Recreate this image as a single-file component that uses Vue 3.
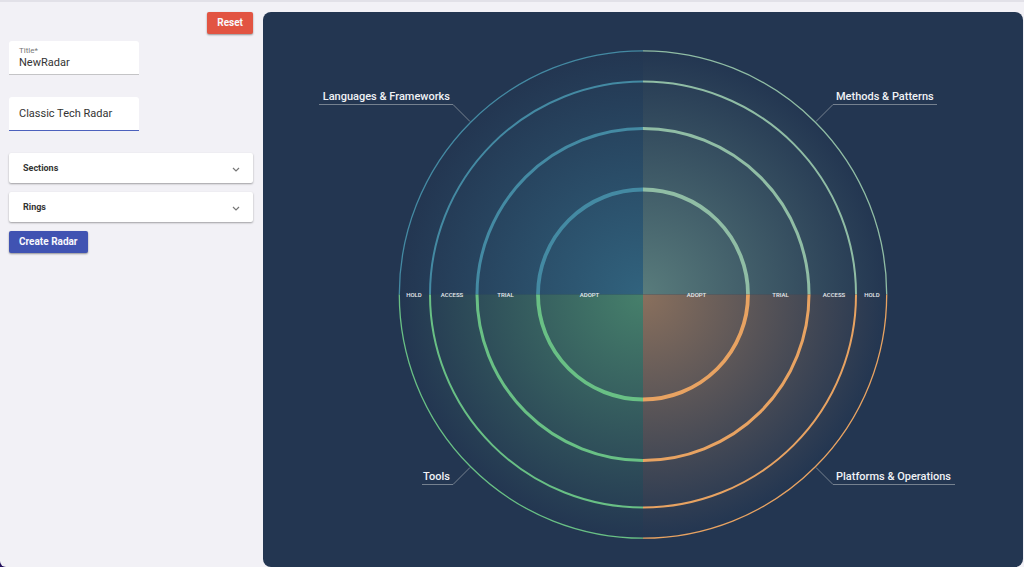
<script setup>
import { ref } from 'vue'

const title = ref('NewRadar')
const type = ref('Classic Tech Radar')
const panels = ['Sections', 'Rings']

const cx = 380
const cy = 282.5

const rings = [
  { name: 'ADOPT', r: 105, width: 3.8, label: 53.5 },
  { name: 'TRIAL', r: 166, width: 3, label: 137.5 },
  { name: 'ACCESS', r: 213, width: 2, label: 191 },
  { name: 'HOLD', r: 243.7, width: 1.3, label: 229 }
]

const outer = 244

const quadrants = [
  { id: 'languages', name: 'Languages & Frameworks', sx: -1, sy: -1, stroke: '#448aa3', fill: '#31637e', length: 131 },
  { id: 'methods', name: 'Methods & Patterns', sx: 1, sy: -1, stroke: '#90bda5', fill: '#597c7c', length: 101 },
  { id: 'tools', name: 'Tools', sx: -1, sy: 1, stroke: '#69c085', fill: '#46806b', length: 28 },
  { id: 'platforms', name: 'Platforms & Operations', sx: 1, sy: 1, stroke: '#e8a362', fill: '#8a705d', length: 119 }
]

const arc = (q, r) =>
  `M${cx + q.sx * r} ${cy}A${r} ${r} 0 0 ${q.sx * q.sy > 0 ? 1 : 0} ${cx} ${cy + q.sy * r}`
const wedge = (q) => `${arc(q, outer)}L${cx} ${cy}Z`
const lineY = (q) => (q.sy < 0 ? 92.5 : 472.5)
const leader = (q) =>
  `M${cx + q.sx * 173} ${cy + q.sy * 173}L${cx + q.sx * 190} ${lineY(q)}H${cx + q.sx * (193 + q.length)}`
</script>

<template>
  <div class="page">
    <aside class="sidebar">
      <div class="actions">
        <button type="button" class="btn danger">Reset</button>
      </div>
      <div class="field">
        <label for="title">Title*</label>
        <input id="title" v-model="title" type="text" required />
      </div>
      <div class="field active">
        <select id="type" v-model="type" aria-label="Radar type">
          <option>Classic Tech Radar</option>
        </select>
      </div>
      <div class="accordion">
        <button v-for="p in panels" :key="p" type="button" class="panel" aria-expanded="false">
          <span>{{ p }}</span>
          <svg class="chevron" viewBox="0 0 8 6" aria-hidden="true">
            <path d="M1 1L4 4L7 1" />
          </svg>
        </button>
      </div>
      <button type="button" class="btn primary">Create Radar</button>
    </aside>
    <main class="board">
      <svg class="radar" viewBox="0 0 760 555" role="img" aria-label="Tech radar">
        <defs>
          <radialGradient
            v-for="q in quadrants"
            :id="'fill-' + q.id"
            :key="q.id"
            gradientUnits="userSpaceOnUse"
            :cx="cx"
            :cy="cy"
            :r="outer"
          >
            <stop offset="0" :stop-color="q.fill" />
            <stop offset="1" :stop-color="q.fill" stop-opacity="0" />
          </radialGradient>
        </defs>
        <g v-for="q in quadrants" :key="q.id">
          <path :d="wedge(q)" :fill="`url(#fill-${q.id})`" />
          <path
            v-for="ring in rings"
            :key="ring.name"
            class="line"
            :d="arc(q, ring.r)"
            :stroke="q.stroke"
            :stroke-width="ring.width"
          />
          <path class="line leader" :d="leader(q)" />
          <text
            class="quadrant"
            :x="cx + q.sx * 193"
            :y="lineY(q) - 5"
            :text-anchor="q.sx < 0 ? 'end' : 'start'"
          >{{ q.name }}</text>
        </g>
        <g v-for="ring in rings" :key="ring.name" class="ring">
          <text :x="cx - ring.label" :y="cy + 2">{{ ring.name }}</text>
          <text :x="cx + ring.label" :y="cy + 2">{{ ring.name }}</text>
        </g>
      </svg>
    </main>
  </div>
</template>

<style>
body {
  margin: 0;
  background: #23105c;
}
</style>

<style scoped>
.page {
  box-sizing: border-box;
  display: flex;
  min-height: 100vh;
  padding: 10px 1px 0 9px;
  gap: 10px;
  border-top: 2px solid #e2e1e8;
  border-bottom-left-radius: 6px;
  background: #f2f1f6;
  color: #333;
  font-family: Roboto, "Liberation Sans", sans-serif;
}
.sidebar {
  display: flex;
  flex: 0 0 244px;
  flex-direction: column;
  align-items: flex-start;
}
.actions {
  display: flex;
  align-self: stretch;
  justify-content: flex-end;
  margin-bottom: 7px;
}
.btn {
  height: 22px;
  padding: 0 10px;
  border: 0;
  border-radius: 2px;
  color: #f8f8fc;
  font: 700 10px/22px Roboto, "Liberation Sans", sans-serif;
  box-shadow: 0 1px 2px rgba(0, 0, 0, 0.4);
}
.danger {
  background: #e25442;
}
.primary {
  background: #4053b2;
}
.field {
  box-sizing: border-box;
  display: flex;
  flex-direction: column;
  justify-content: center;
  width: 130px;
  height: 34px;
  margin-bottom: 22px;
  padding: 0 10px;
  border-bottom: 1px solid #c4c4c6;
  border-radius: 3px 3px 0 0;
  background: #fff;
}
.field.active {
  border-bottom-color: #4c61bd;
}
.field label {
  color: #777;
  font-size: 8px;
  line-height: 10px;
}
.field input,
.field select {
  width: 100%;
  margin: 0;
  padding: 0;
  border: 0;
  outline: 0;
  appearance: none;
  background: transparent;
  color: #333;
  font: 400 11px/14px Roboto, "Liberation Sans", sans-serif;
}
.accordion {
  display: flex;
  align-self: stretch;
  flex-direction: column;
  gap: 9px;
  margin-bottom: 9px;
}
.panel {
  display: flex;
  align-items: center;
  justify-content: space-between;
  height: 30px;
  padding: 0 13px 0 14px;
  border: 0;
  border-radius: 2px;
  background: #fff;
  color: #333;
  font: 700 9px/12px Roboto, "Liberation Sans", sans-serif;
  box-shadow: 0 1px 2px rgba(0, 0, 0, 0.35);
}
.chevron {
  width: 8px;
  height: 6px;
  margin-top: 3px;
  fill: none;
  stroke: #777;
  stroke-width: 1.2;
}
.board {
  display: flex;
  flex: 1;
  min-width: 0;
  border-radius: 8px;
  background: #233651;
}
.radar {
  display: block;
  width: 100%;
}
.line {
  fill: none;
}
.leader {
  stroke: #75818f;
  stroke-width: 1;
}
.quadrant {
  fill: #f0f2f5;
  font-size: 11px;
  font-weight: 500;
}
.ring text {
  fill: #e6eaee;
  font-size: 6px;
  font-weight: 500;
  text-anchor: middle;
}
</style>
